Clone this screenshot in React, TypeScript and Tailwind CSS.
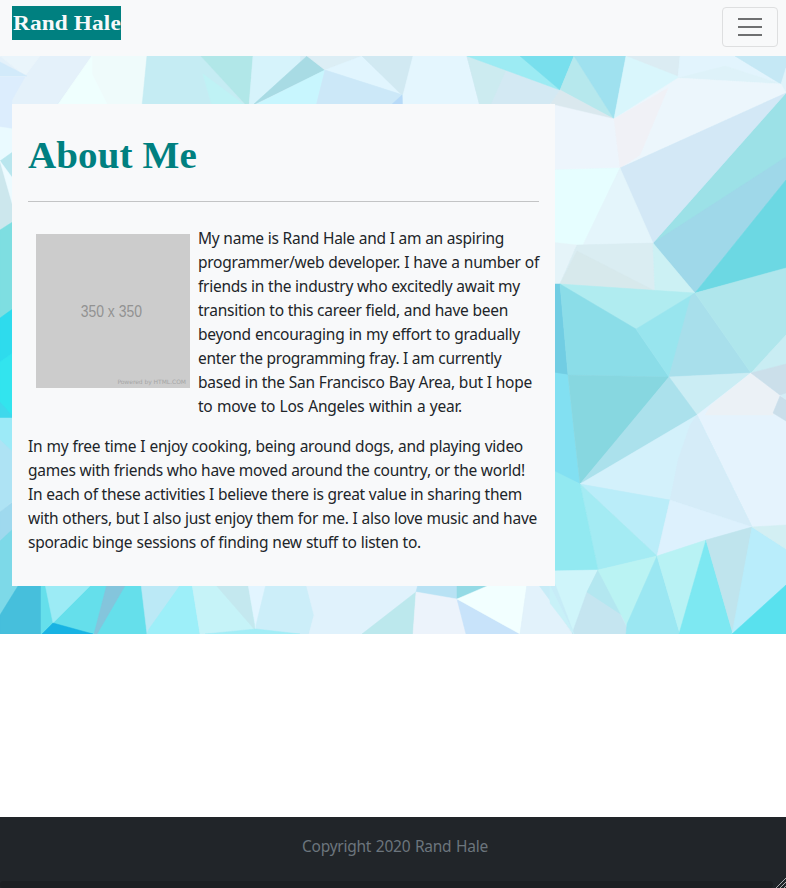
import React from "react";

type Shape = [points: string, fill: string];

const shapes: Shape[] = [
  // top strip
  ["0,56 94,56 56,106 12,106 0,170", "#e4f1fa"],
  ["0,56 40,56 25,76", "#eaf5fb"],
  ["0,62 27,76 0,76", "#d2eafa"],
  ["0,77 25,77 12,100 12,128 0,128", "#dcedfd"],
  ["92,56 147,56 143,106 57,106", "#effbfb"],
  ["92,56 92,74 108,106 57,106", "#effffe"],
  ["147,56 201,56 246,106 142,106", "#c5ecf3"],
  ["203,74 246,106 212,106", "#bff2f5"],
  ["201,56 253,56 249,106 245,104", "#b1e7e8"],
  ["253,56 300,56 300,62 253,106 249,106", "#d6f3fb"],
  ["253,105 307,56 325,70", "#a8dbe4"],
  ["253,106 325,70 316,106", "#c8f6fe"],
  ["307,56 362,56 325,70", "#dceef5"],
  ["325,70 362,56 403,95", "#e1f5fe"],
  ["362,56 413,56 403,96", "#d1e9f2"],
  ["325,70 403,95 403,106 316,106", "#cce8f8"],
  ["402,95 403,106 390,106", "#b7daf8"],
  ["413,56 467,56 480,106 403,106 403,95", "#e4f6fe"],
  ["467,56 560,90 555,108 480,106", "#d3e9f3"],
  ["467,56 506,70 490,106 480,106", "#ccebf0"],
  ["467,56 521,56 560,90", "#9cebf3"],
  ["520,56 574,56 560,90", "#78dfed"],
  // upper right
  ["574,56 614,119 560,90", "#b6e8ed"],
  ["574,56 626,56 614,119", "#9fe1ef"],
  ["560,90 614,119 550,105", "#dae8ee"],
  ["550,104 614,119 620,168 550,170", "#edf5fc"],
  ["626,56 680,56 678,78 614,119", "#d9f6fc"],
  ["627,56 680,56 678,76", "#dbecf3"],
  ["680,56 735,56 781,84 678,78", "#e2f4fd"],
  ["678,78 725,66 781,84", "#def2f9"],
  ["735,56 786,56 786,70 781,84", "#c5e8f5"],
  ["786,68 786,93 781,84", "#e0f3fa"],
  ["678,78 781,84 786,93 620,168 614,119", "#ecf6fc"],
  ["614,119 668,88 640,155 620,168", "#f0f1f6"],
  ["786,93 786,180 695,293 653,243", "#9ce1e7"],
  ["786,157 786,180 695,293 653,243", "#9fd8e9"],
  ["620,168 786,93 653,243", "#d3e8f6"],
  ["786,180 786,269 695,293", "#6cd8e3"],
  ["550,170 620,168 585,245 550,245", "#e6feff"],
  ["620,168 653,243 583,245", "#e4f5fb"],
  ["550,242 577,245 560,284 550,284", "#e5f4f9"],
  ["577,245 653,243 655,291 560,284", "#daedf2"],
  ["577,251 655,291 560,284", "#d7e9ec"],
  ["653,243 695,293 655,291", "#ccf1f4"],
  // middle right
  ["560,284 695,293 636,329", "#b0ecf0"],
  ["550,284 560,284 568,375 550,373", "#71cde3"],
  ["560,284 636,329 669,377 568,375", "#8bdde8"],
  ["550,372 568,375 575,440 580,484 550,470", "#82e0f2"],
  ["568,375 669,377 617,440 580,484 575,440", "#87d7e0"],
  ["636,329 695,293 669,377", "#98e5ee"],
  ["691,296 695,293 751,373 669,377", "#a8dfeb"],
  ["695,293 786,268 786,335 751,373", "#afe6ec"],
  ["751,373 786,335 786,364", "#c9edf3"],
  ["669,377 751,373 697,415", "#cbedf4"],
  ["669,377 697,415 580,484", "#abe1ec"],
  ["697,415 751,373 786,400 786,526 752,527", "#e5f3fd"],
  ["711,405 751,373 780,395 773,415 705,415", "#ebf1f6"],
  ["751,373 786,364 786,393 780,395", "#cbdfea"],
  ["780,396 786,400 786,421 773,413", "#cadeea"],
  ["580,484 697,415 752,527 670,500", "#d3f1fb"],
  ["690,425 697,415 752,527 670,500 678,460", "#d5ecf8"],
  // lower right
  ["580,484 670,500 657,556", "#baedf9"],
  ["580,484 657,556 598,570", "#a4ebf3"],
  ["550,469 580,484 598,570 550,571", "#92e9f1"],
  ["670,500 752,527 706,540 657,556", "#ddf1fd"],
  ["550,571 598,570 574,634 550,590", "#cff5fa"],
  ["598,570 630,634 572,634 587,592", "#c5e5f0"],
  ["598,570 587,592 622,615", "#b3e7f0"],
  ["598,570 657,556 627,626", "#baf3f3"],
  ["657,556 680,634 626,634 627,624", "#9be7f2"],
  ["657,556 706,540 680,634", "#b8f2f4"],
  ["706,540 733,634 679,634", "#7de8f2"],
  ["706,540 752,527 733,634", "#bfe4ed"],
  ["752,527 786,549 786,586 732,634", "#b9edfb"],
  ["752,527 786,525 786,549", "#d3eff3"],
  ["786,585 786,634 732,634", "#59e1ee"],
  // left edge
  ["0,127 14,129 14,152 0,162", "#eafaff"],
  ["0,161 14,151 14,188", "#b9e6ee"],
  ["0,161 14,190 14,220 0,230", "#cce7ed"],
  ["0,161 14,180 14,210", "#edfbff"],
  ["0,230 14,221 14,310 0,318", "#7edee1"],
  ["0,318 14,308 14,365 0,375", "#2edbed"],
  ["0,362 14,352 14,418 0,418", "#32e4ee"],
  ["0,402 14,418 0,418", "#3fd8ec"],
  ["0,418 14,418 14,456 0,440", "#9ceaf7"],
  ["0,440 14,453 14,500 0,512", "#aee3f4"],
  ["0,512 14,501 14,540 0,541", "#9fd9ee"],
  ["0,541 14,528 20,586 0,616", "#7dd9e8"],
  // bottom strip
  ["18,586 41,584 41,634 0,634 0,615", "#46bfdc"],
  ["41,584 146,584 147,634 41,634", "#65dfeb"],
  ["45,584 92,584 53,623", "#9cebf5"],
  ["107,584 126,584 97,634 94,634", "#84c5dc"],
  ["53,623 93,634 42,634", "#18b3e3"],
  ["141,584 192,584 147,634", "#bbe9f6"],
  ["181,584 192,584 200,634 147,634 149,629", "#9deff9"],
  ["192,584 248,584 256,629 200,634", "#c6f3f8"],
  ["215,584 248,584 255,630", "#c4e8ef"],
  ["248,584 267,584 256,629", "#e2f5ff"],
  ["266,584 306,584 314,615 309,634 256,634 256,625", "#cceef9"],
  ["205,634 256,629 300,634", "#a2edf6"],
  ["306,584 420,584 416,593 362,634 309,634 314,615", "#e0f2fc"],
  ["416,592 413,634 362,634", "#bce8ed"],
  ["418,584 458,584 457,600 416,592", "#b8e2f4"],
  ["457,584 498,584 457,599", "#93dae5"],
  ["416,592 457,599 466,634 413,634", "#ecf3fb"],
  ["457,599 520,634 466,634", "#c8e3fa"],
  ["492,584 527,584 520,634 457,599", "#f2ffff"],
  ["527,584 540,584 572,634 520,634", "#e2f2fb"],
  ["538,584 555,584 574,634 571,629", "#c7ecf7"],
  ["550,603 550,586 574,634", "#c8f1f8"],
];

const intro: [text: string, width: string][] = [
  ["My name is Rand Hale and I am an aspiring", "w-[306px]"],
  ["programmer/web developer. I have a number of", "w-[341px]"],
  ["friends in the industry who excitedly await my", "w-[322px]"],
  ["transition to this career field, and have been", "w-[310px]"],
  ["beyond encouraging in my effort to gradually", "w-[322px]"],
  ["enter the programming fray. I am currently", "w-[302px]"],
  ["based in the San Francisco Bay Area, but I hope", "w-[334px]"],
  ["to move to Los Angeles within a year.", "w-[264px]"],
];

const hobbies: [text: string, width: string][] = [
  ["In my free time I enjoy cooking, being around dogs, and playing video", "w-[495px]"],
  ["games with friends who have moved around the country, or the world!", "w-[497px]"],
  ["In each of these activities I believe there is great value in sharing them", "w-[494px]"],
  ["with others, but I also just enjoy them for me. I also love music and have", "w-[509px]"],
  ["sporadic binge sessions of finding new stuff to listen to.", "w-[393px]"],
];

function Lines({ lines }: { lines: [string, string][] }) {
  return (
    <p>
      {lines.map(([text, width]) => (
        <span key={text} className={`block h-6 whitespace-nowrap [text-align-last:justify] ${width}`}>
          {text}{" "}
        </span>
      ))}
    </p>
  );
}

export default function App() {
  return (
    <div className="flex h-[888px] flex-col overflow-hidden bg-white font-['Noto_Sans',sans-serif] text-[15.5px] leading-6 tracking-[-0.25px] text-[#212529]">
      <nav className="flex h-14 shrink-0 items-start justify-between bg-[#f8f9fa] pl-3 pr-2">
        <a className="mt-1.5 h-[34px] w-[109px] whitespace-nowrap bg-[#008080] pl-px font-['Liberation_Serif',serif] text-[21px] font-bold leading-[34px] tracking-[0.1px] text-[#f8f9fa]">
          <span className="inline-block origin-left scale-x-[1.11]">Rand Hale</span>
        </a>
        <button aria-label="Menu" className="mt-[7px] flex h-10 w-14 flex-col items-center justify-center gap-1.5 rounded border border-[#dedfe0]">
          <span className="h-0.5 w-6 bg-[#6f7071]" />
          <span className="h-0.5 w-6 bg-[#6f7071]" />
          <span className="h-0.5 w-6 bg-[#6f7071]" />
        </button>
      </nav>

      <main className="relative h-[578px] shrink-0 px-3 pt-12">
        <svg className="absolute inset-0 h-full w-full" viewBox="0 56 786 578" preserveAspectRatio="none" aria-hidden="true">
          <rect x="0" y="56" width="786" height="578" fill="#d3edf6" />
          {shapes.map(([points, fill], i) => (
            <polygon key={i} points={points} fill={fill} stroke={fill} strokeWidth="0.5" />
          ))}
        </svg>
        <section className="relative h-[482px] w-[543px] bg-[#f8f9fa] px-4 pt-4">
          <h1 className="h-[81px] whitespace-nowrap pt-3 font-['Liberation_Serif',serif] text-[37px] font-bold leading-[48px] tracking-[0.1px] text-[#008080]">
            <span className="inline-block origin-left scale-x-[1.055]">About Me</span>
          </h1>
          <hr className="border-[#c3c4c5]" />
          <div className="mt-6 flex">
            <div className="relative ml-2 mr-2 mt-2 flex h-[154px] w-[154px] shrink-0 items-center justify-center bg-[#cccccc] font-['Liberation_Sans',sans-serif]">
              <span className="mr-1 mt-0.5 scale-x-[0.82] whitespace-nowrap text-[17px] tracking-normal text-[#929292]">350 x 350</span>
              <span className="absolute bottom-0.5 right-1 whitespace-nowrap font-['DejaVu_Sans',sans-serif] text-[6px] leading-[9px] tracking-[-0.04px] text-[#a6a6a6]">
                Powered by HTML.COM
              </span>
            </div>
            <Lines lines={intro} />
          </div>
          <div className="mt-4">
            <Lines lines={hobbies} />
          </div>
        </section>
      </main>

      <footer className="relative mt-auto flex h-[71px] shrink-0 justify-center bg-[#212529] pl-1 pt-[17px] text-[#6c757d]">
        <span className="block w-[186px] whitespace-nowrap [text-align-last:justify]">Copyright 2020 Rand Hale</span>
        <div className="absolute bottom-0 left-0 h-[7px] w-[773px] rounded-sm bg-[#1c1f22]" />
        <svg className="absolute bottom-0 right-0 h-[10px] w-[10px]" viewBox="0 0 10 10" aria-hidden="true">
          <path d="M0 10 10 0M4 10 10 4M8 10 10 8" stroke="#aaacae" strokeWidth="1" />
        </svg>
      </footer>
    </div>
  );
}
